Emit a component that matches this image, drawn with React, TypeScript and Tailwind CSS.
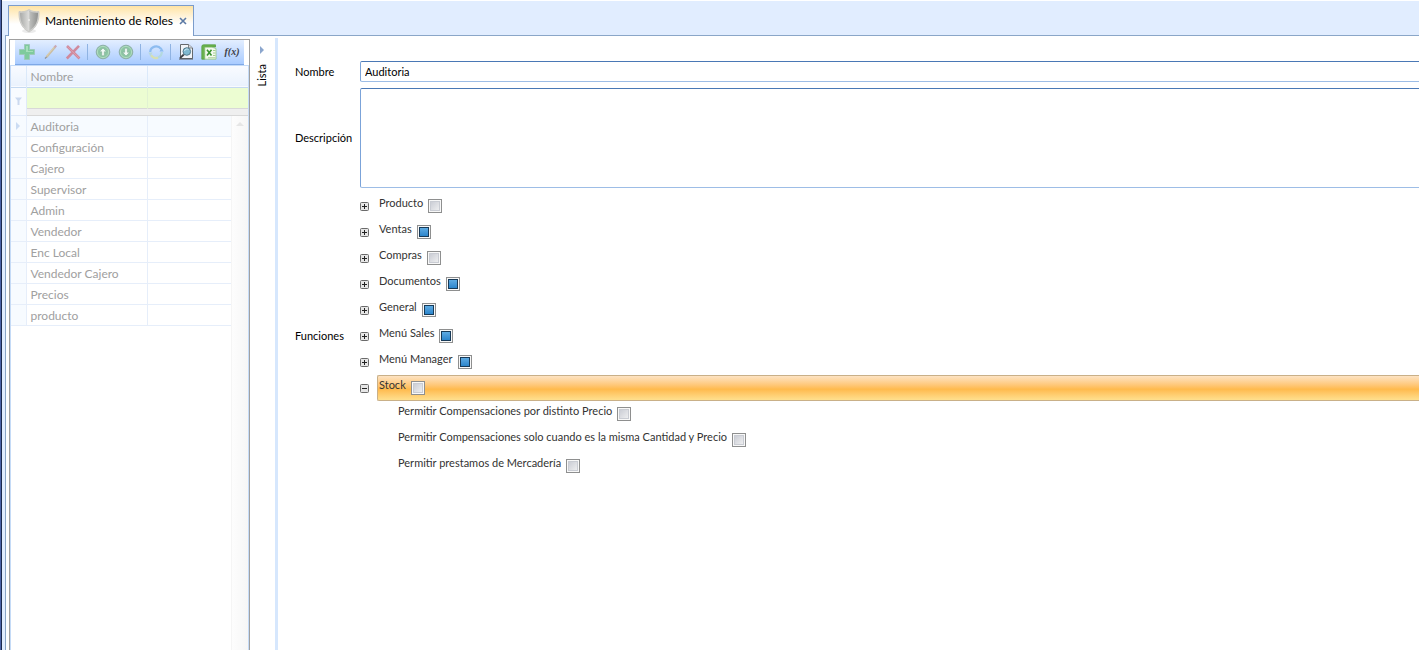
import React, { useEffect, useRef } from "react";

type State = "off" | "mixed";

interface Funcion {
  name: string;
  state: State;
  children?: string[];
}

const roles = [
  "Auditoria",
  "Configuración",
  "Cajero",
  "Supervisor",
  "Admin",
  "Vendedor",
  "Enc Local",
  "Vendedor Cajero",
  "Precios",
  "producto",
];

const funciones: Funcion[] = [
  { name: "Producto", state: "off" },
  { name: "Ventas", state: "mixed" },
  { name: "Compras", state: "off" },
  { name: "Documentos", state: "mixed" },
  { name: "General", state: "mixed" },
  { name: "Menú Sales", state: "mixed" },
  { name: "Menú Manager", state: "mixed" },
  {
    name: "Stock",
    state: "off",
    children: [
      "Permitir Compensaciones por distinto Precio",
      "Permitir Compensaciones solo cuando es la misma Cantidad y Precio",
      "Permitir prestamos de Mercadería",
    ],
  },
];

const ShieldIcon = () => (
  <svg width="24" height="26" viewBox="0 0 24 26">
    <defs>
      <linearGradient id="shieldL" x1="0" x2="1">
        <stop offset="0" stopColor="#a9aaa8" />
        <stop offset="1" stopColor="#dededc" />
      </linearGradient>
      <linearGradient id="shieldR" x1="0" x2="1">
        <stop offset="0" stopColor="#c2c3c1" />
        <stop offset="1" stopColor="#8f908e" />
      </linearGradient>
    </defs>
    <ellipse cx="12" cy="23" rx="7" ry="2" fill="#000" opacity=".08" />
    <path d="M12 1.5C9 3.6 5.500 4 2 3.600 1.600 12 4 20 12 24 20 20 22.400 12 22 3.600 18.500 4 15 3.600 12 1.500Z" fill="#d2d2d0" stroke="#c4c4c0" strokeWidth=".8" />
    <path d="M12 2.800C9.500 4.400 6 5 3 4.700 3 12.500 5.200 19.200 12 22.800Z" fill="url(#shieldL)" />
    <path d="M12 2.800C14.500 4.400 18 5 21 4.700 21 12.500 18.800 19.200 12 22.800Z" fill="url(#shieldR)" />
    <path d="M12 4V22" stroke="#dcdcda" strokeWidth=".6" />
    <circle cx="12" cy="12" r="1" fill="#ececea" />
  </svg>
);

const AddIcon = () => (
  <svg width="16" height="16" viewBox="0 0 16 16">
    <path d="M5.500 .5H10.500V5.500H15.500V10.500H10.500V15.500H5.500V10.500H.5V5.500H5.500Z" fill="#7fcb9d" stroke="#9fc9bd" />
    <path d="M7 2H9V7H14V8H7Z" fill="#a5dfba" />
  </svg>
);

const EditIcon = () => (
  <svg width="16" height="16" viewBox="0 0 16 16">
    <path d="M4.500 13L13 3" stroke="#c9bda4" strokeWidth="2.200" />
    <path d="M4.200 12.500L12.500 2.800" stroke="#e2d5b5" strokeWidth=".8" />
    <path d="M12.500 3.500L14.200 1.600" stroke="#c9a9b4" strokeWidth="2.200" />
    <path d="M3 14.500L4.700 12.800" stroke="#8f8f94" strokeWidth="1.200" />
  </svg>
);

const DeleteIcon = () => (
  <svg width="16" height="16" viewBox="0 0 16 16">
    <path d="M2 2L14.500 14.500M14 1.800L1.800 14.500" stroke="#d08a9d" strokeWidth="2.600" />
    <path d="M2.500 2.500L14 14" stroke="#dda3b0" strokeWidth=".8" />
  </svg>
);

const ArrowIcon = ({ down }: { down?: boolean }) => (
  <svg width="16" height="16" viewBox="0 0 16 16">
    <circle cx="8" cy="8" r="6.800" fill="#8cc5a3" stroke="#8fb0a8" />
    <circle cx="8" cy="8" r="5.600" fill="none" stroke="#b0dcc0" />
    <path
      d={down ? "M8 12L4.500 8.300H6.700V4.300H9.300V8.300H11.500Z" : "M8 4L4.500 7.700H6.700V11.700H9.300V7.700H11.500Z"}
      fill="#f2faf6"
      stroke="#7ba692"
      strokeWidth=".5"
    />
  </svg>
);

const RefreshIcon = () => (
  <svg width="16" height="16" viewBox="0 0 16 16" fill="none" strokeWidth="2.200">
    <path d="M2.200 8A6 6 0 0 1 13 4.800" stroke="#8dbcf0" />
    <path d="M13.800 8A6 6 0 0 1 10 13.600" stroke="#b3d9df" />
    <path d="M10 13.600A6 6 0 0 1 3 11.200" stroke="#d5dfb4" />
    <path d="M11.500 7.500L15.700 7.500L13.600 3.500Z" fill="#8dbcf0" />
    <path d="M.3 8.500H4.500L2.400 12.500Z" fill="#b8d8dc" />
  </svg>
);

const PreviewIcon = () => (
  <svg width="16" height="16" viewBox="0 0 16 16">
    <path d="M2.500 .5H10.500L14.500 4V14.500H2.500Z" fill="#f1f4f8" stroke="#65696d" />
    <path d="M10.500 .5V4H14.500" fill="#d8dce2" stroke="#65696d" strokeWidth=".8" />
    <path d="M1 15H15" stroke="#55585c" />
    <path d="M5.800 10.500L2 14.200" stroke="#3b3e42" strokeWidth="1.800" />
    <circle cx="8.800" cy="7.500" r="3.800" fill="#7fb9d0" stroke="#547b8d" />
    <path d="M6.500 7A2.500 2.500 0 0 1 10.500 5.600" stroke="#cfe9f2" fill="none" />
  </svg>
);

const ExcelIcon = () => (
  <svg width="16" height="16" viewBox="0 0 16 16">
    <path d="M.8 2.500Q.8 .8 2.500 .8H14.500V3H3.800V15.200H.8Z" fill="#6bb34e" stroke="#4f9a3a" strokeWidth=".7" />
    <path d="M3.800 3.200H11L15 4.500V15.200H3.800Z" fill="#f3f9ee" stroke="#8ac274" strokeWidth=".7" />
    <path d="M12 6.500H14.500M12 9H14.500M12 11.500H14.500M7 13.800H14.500" stroke="#a5cf92" />
    <path d="M6 5.800L10.500 11.500M10.500 5.800L6 11.500" stroke="#3b9430" strokeWidth="1.600" />
  </svg>
);

const FilterIcon = () => (
  <svg width="7" height="8" viewBox="0 0 7 8">
    <path d="M0 .5H7L4.500 3.500V8H2.500V3.500Z" fill="#cbd9ef" />
  </svg>
);

const TreeToggle = ({ open, label }: { open: boolean; label: string }) => (
  <button type="button" aria-label={label} aria-expanded={open} className="mt-px size-[9px] shrink-0">
    <svg width="9" height="9" viewBox="0 0 9 9">
      <rect x=".5" y=".5" width="8" height="8" rx="1" fill="#e6e6e6" stroke="#6a6a6a" />
      <path d={open ? "M2 4.500H7" : "M2 4.500H7M4.500 2V7"} stroke="#222" />
    </svg>
  </button>
);

const Check = ({ id, state }: { id: string; state: State }) => {
  const ref = useRef<HTMLInputElement>(null);

  useEffect(() => {
    if (ref.current) ref.current.indeterminate = state === "mixed";
  }, [state]);

  return (
    <input
      ref={ref}
      id={id}
      type="checkbox"
      className="size-[14px] shrink-0 appearance-none border border-[#8e8f8f] bg-linear-to-br from-[#c3c6cf] to-[#f6f6f6] shadow-[inset_0_0_0_1px_#f8f8f8,inset_0_0_0_2px_#c9ccd3] indeterminate:bg-linear-to-b indeterminate:from-[#69b4e8] indeterminate:to-[#1a7cc6] indeterminate:shadow-[inset_0_0_0_1px_#f8f8f8,inset_0_0_0_2px_#173a58]"
    />
  );
};

const Tool = ({ label, children }: { label: string; children: React.ReactNode }) => (
  <button type="button" aria-label={label} className="flex size-4 shrink-0 items-center justify-center">
    {children}
  </button>
);

const Separator = () => <span className="-ml-px h-4 w-px shrink-0 bg-[#8fb3e3]" />;

const ListColumns = () => (
  <colgroup>
    <col className="w-[15px]" />
    <col className="w-[121px]" />
    <col />
  </colgroup>
);

const RoleList = () => (
  <aside className="flex w-[241px] shrink-0 flex-col border-x border-t border-[#a0a0a0]">
    <div className="mx-[5px] flex h-[25px] items-center gap-[7px] border-b border-[#7fa8e6] bg-linear-to-b from-[#e3eeff] to-[#a9cbff] pl-1">
      <Tool label="Agregar"><AddIcon /></Tool>
      <Tool label="Editar"><EditIcon /></Tool>
      <Tool label="Eliminar"><DeleteIcon /></Tool>
      <Separator />
      <Tool label="Subir"><ArrowIcon /></Tool>
      <Tool label="Bajar"><ArrowIcon down /></Tool>
      <Separator />
      <Tool label="Actualizar"><RefreshIcon /></Tool>
      <Separator />
      <Tool label="Vista previa"><PreviewIcon /></Tool>
      <Tool label="Excel"><ExcelIcon /></Tool>
      <Tool label="Función">
        <span className="font-['Liberation_Serif',serif] text-[10px] font-bold italic leading-4 text-[#3c4048]">f(x)</span>
      </Tool>
    </div>

    <div className="flex grow flex-col border-x border-t border-[#c5dbf7] text-[12px] text-[#a0a0a0]">
      <table className="w-full table-fixed border-collapse">
        <ListColumns />
        <thead>
          <tr className="h-[21px] border-b border-[#c5d9f1] bg-linear-to-b from-[#f9fbff] to-[#eaf2fd]">
            <th className="border-r border-[#dbe9fa] p-0" />
            <th className="border-r border-[#dbe9fa] p-0 pl-1 pt-[2px] text-left font-normal leading-4">Nombre</th>
            <th className="p-0" />
          </tr>
        </thead>
        <tbody>
          <tr className="h-[21px]">
            <td rowSpan={2} className="border-b border-r border-[#e0eaf8] bg-[#f8fbff] p-0">
              <div className="flex justify-center"><FilterIcon /></div>
            </td>
            <td className="border-r border-[#e1f2d2] bg-[#ecfdd2] p-0">
              <input aria-label="Filtrar nombre" className="block h-5 w-full bg-transparent px-1 outline-none" />
            </td>
            <td className="bg-[#ecfdd2] p-0" />
          </tr>
          <tr className="h-[7px]">
            <td colSpan={2} className="border-y border-[#d8d8d8] bg-[#efefef] p-0" />
          </tr>
        </tbody>
      </table>

      <div className="flex grow">
        <div className="grow">
          <table className="w-full table-fixed border-collapse">
            <ListColumns />
            <tbody>
              {roles.map((role, i) => (
                <tr key={role} className={`h-[21px] border-b border-[#e6eefa] ${i === 0 ? "bg-[#f7fbff]" : ""}`}>
                  <td className="border-r border-[#e6eefa] bg-[#f7fbff] p-0">
                    {i === 0 && (
                      <svg className="mx-auto" width="4" height="8" viewBox="0 0 4 8">
                        <path d="M0 0L4 4L0 8Z" fill="#cbdcf3" />
                      </svg>
                    )}
                  </td>
                  <td className="whitespace-nowrap border-r border-[#e6eefa] p-0 pl-1 pt-[2px] leading-4">{role}</td>
                  <td className="p-0" />
                </tr>
              ))}
            </tbody>
          </table>
        </div>
        <div className="w-[17px] shrink-0 border-l border-[#f5f5f5] bg-linear-to-r from-[#fdfdfd] to-[#f6f6f6] pt-[6px]">
          <svg className="mx-auto" width="8" height="4" viewBox="0 0 8 4">
            <path d="M4 0L8 4H0Z" fill="#e6e6e6" />
          </svg>
        </div>
      </div>
    </div>
  </aside>
);

const FuncionTree = () => (
  <ul className="text-[11px] leading-4 text-[#333]">
    {funciones.map((f) => {
      const open = Boolean(f.children);
      return (
        <li key={f.name}>
          <div className="flex h-[26px] items-center gap-2">
            <TreeToggle open={open} label={f.name} />
            <div
              className={`flex h-[26px] grow items-start gap-[5px] border-y border-l pl-px pt-px ${
                open
                  ? "rounded-l-xs border-[#c9b088] bg-linear-to-b from-[#fde3c2] from-0% via-[#ffba4c] via-55% to-[#ffe08e]"
                  : "border-transparent"
              }`}
            >
              <label htmlFor={f.name}>{f.name}</label>
              <span className="flex pt-1"><Check id={f.name} state={f.state} /></span>
            </div>
          </div>
          {f.children && (
            <ul>
              {f.children.map((child) => (
                <li key={child} className="flex h-[26px] items-start gap-[5px] pl-[38px] pt-[2px]">
                  <label htmlFor={child}>{child}</label>
                  <span className="flex pt-1"><Check id={child} state="off" /></span>
                </li>
              ))}
            </ul>
          )}
        </li>
      );
    })}
  </ul>
);

const RoleForm = () => (
  <main className="grid grow grid-cols-[57px_1fr] content-start items-center gap-x-2 pl-[17px] pt-[25px] text-[11px] leading-4 text-black">
    <label htmlFor="nombre">Nombre</label>
    <input
      id="nombre"
      defaultValue="Auditoria"
      className="h-[21px] w-full rounded-l-xs border border-r-0 border-b-[#9dbde6] border-l-[#7ba3d9] border-t-[#4a78b5] bg-white px-1 outline-none"
    />
    <label htmlFor="descripcion">Descripción</label>
    <textarea
      id="descripcion"
      className="mt-[6px] mb-[5px] block h-[100px] w-full resize-none rounded-l-xs border border-r-0 border-b-[#9dbde6] border-l-[#7ba3d9] border-t-[#4a78b5] bg-white px-1 outline-none"
    />
    <span>Funciones</span>
    <FuncionTree />
  </main>
);

const App = () => {
  return (
    <div className="flex min-h-screen overflow-hidden bg-[#e1edff] font-['Lato','Open_Sans',sans-serif]">
      <div className="w-[2px] shrink-0 border-r border-[#1d2a4d] bg-[#4a63a8]" />
      <div className="flex min-w-0 grow flex-col border-t border-white pl-[3px]">
        <header className="flex h-[35px] items-end border-b border-[#8aa6c8] pl-[3px]">
          <div className="-mb-px flex h-[31px] items-center border border-b-0 border-[#7b9ccb] bg-linear-to-b from-[#ffe3a3] to-white to-60% pl-2 pr-[6px]">
            <ShieldIcon />
            <span className="ml-1 whitespace-nowrap text-[12px] leading-4 text-black">Mantenimiento de Roles</span>
            <button type="button" aria-label="Cerrar" className="ml-[6px]">
              <svg width="8" height="8" viewBox="0 0 8 8">
                <path d="M1 1L7 7M7 1L1 7" stroke="#5b79a5" strokeWidth="1.600" />
              </svg>
            </button>
          </div>
        </header>

        <div className="flex grow border-l border-[#8aa6c8] bg-white pl-[3px]">
          <div className="flex pt-[3px]">
            <RoleList />
          </div>
          <button type="button" className="flex w-6 shrink-0 flex-col items-center gap-[10px] pt-[10px]">
            <svg width="4" height="8" viewBox="0 0 4 8">
              <path d="M0 0L4 4L0 8Z" fill="#8ba6cd" />
            </svg>
            <span className="rotate-180 text-[11px] leading-4 text-black [writing-mode:vertical-rl]">Lista</span>
          </button>
          <div className="ml-px mt-[2px] w-[3px] shrink-0 bg-[#d6e7fd]" />
          <RoleForm />
        </div>
      </div>
    </div>
  );
};

export default App;
